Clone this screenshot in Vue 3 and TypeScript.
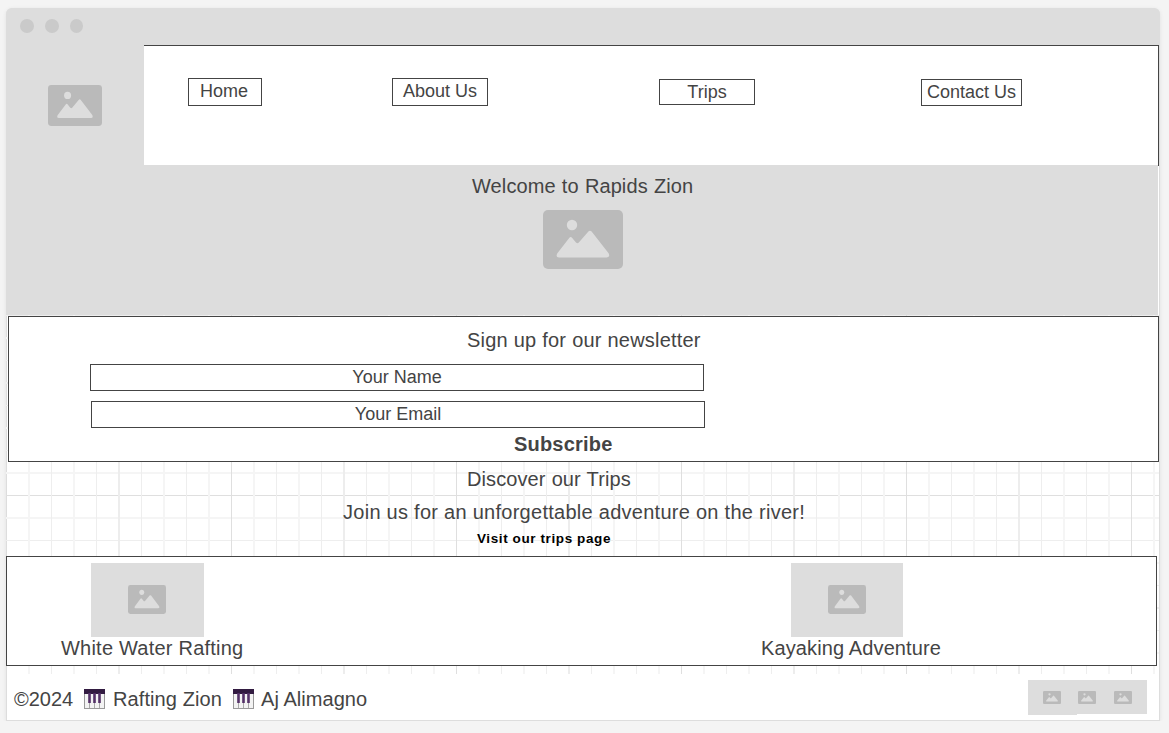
<script setup lang="ts">
import { defineComponent, h } from 'vue'

const PictureIcon = defineComponent({
  name: 'PictureIcon',
  setup() {
    return () =>
      h('svg', { viewBox: '0 0 80 59', preserveAspectRatio: 'none', 'aria-hidden': 'true' }, [
        h('rect', { width: 80, height: 59, rx: 5, fill: '#bababa' }),
        h('circle', { cx: 29, cy: 15, r: 5.2, fill: '#ddd' }),
        h('path', {
          d: 'M14.2 43.5 L26.2 28 Q27.7 26.2 29.2 28 L33 32.6 Q34.4 34 35.8 32.6 L45.4 21.5 Q47 19.8 48.6 21.5 L65.6 43.3 Q67.5 47.4 63.8 47.4 H16 Q12.4 47.4 14.2 43.5 Z',
          fill: '#ddd',
        }),
      ])
  },
})

const PianoIcon = defineComponent({
  name: 'PianoIcon',
  setup() {
    return () =>
      h('svg', { viewBox: '0 0 21 20', 'aria-hidden': 'true' }, [
        h('rect', { x: 0.5, y: 0.5, width: 20, height: 19, fill: '#f3f3f3', stroke: '#999' }),
        h('path', { d: 'M5.5 5V19M10.5 5V19M15.5 5V19', stroke: '#aaa', 'stroke-width': 1 }),
        h('rect', { width: 21, height: 5, fill: '#321b41' }),
        h('path', { d: 'M5.5 4V14M10.5 4V14M15.5 4V14', stroke: '#543168', 'stroke-width': 2.6 }),
      ])
  },
})

interface GridLine { at: number; width: number; color: string }

function gridLine(k: number, start: number, majorOffset: number): GridLine {
  const at = start + k * 22.5
  const crisp = at % 1 !== 0
  const major = (k + majorOffset) % 5 === 0
  return {
    at,
    width: crisp ? 1 : 2,
    color: major ? (crisp ? '#dfdfdf' : '#ededed') : crisp ? '#eeeeee' : '#f5f5f5',
  }
}

const columns = Array.from({ length: 51 }, (_, k) => gridLine(k + 1, 0.5, 0))
const rows = Array.from({ length: 17 }, (_, k) => gridLine(k, 0.5, 2))

const links = [
  { label: 'Home', cls: 'home' },
  { label: 'About Us', cls: 'about' },
  { label: 'Trips', cls: 'trips-link' },
  { label: 'Contact Us', cls: 'contact' },
]
</script>

<template>
  <div class="window">
    <div class="titlebar"><i /><i /><i /></div>
    <header class="top">
      <div class="logo"><PictureIcon class="pic-logo" /></div>
      <nav>
        <a v-for="l in links" :key="l.label" :class="l.cls">{{ l.label }}</a>
      </nav>
    </header>
    <section class="hero">
      <h1><span class="t-welcome">Welcome to Rapids Zion</span></h1>
      <PictureIcon class="pic-hero" />
    </section>
    <div class="canvas">
      <svg class="grid" width="1153" height="359" aria-hidden="true">
        <line v-for="r in rows" :key="'r' + r.at" x1="0" x2="1153" :y1="r.at" :y2="r.at" :stroke="r.color" :stroke-width="r.width" />
        <line v-for="c in columns" :key="'c' + c.at" y1="0" y2="359" :x1="c.at" :x2="c.at" :stroke="c.color" :stroke-width="c.width" />
      </svg>
      <section class="newsletter">
        <h2><span class="t-sign">Sign up for our newsletter</span></h2>
        <div class="field name">Your Name</div>
        <div class="field email">Your Email</div>
        <div class="subscribe"><span class="t-sub">Subscribe</span></div>
      </section>
      <section class="discover">
        <h2><span class="t-disc">Discover our Trips</span></h2>
        <p><span class="t-join">Join us for an unforgettable adventure on the river!</span></p>
        <div class="visit"><span class="t-visit">Visit our trips page</span></div>
      </section>
      <section class="trips">
        <article class="rafting">
          <div class="photo"><PictureIcon class="pic-card" /></div>
          <h3><span class="t-white">White Water Rafting</span></h3>
        </article>
        <article class="kayaking">
          <div class="photo"><PictureIcon class="pic-card" /></div>
          <h3><span class="t-kayak">Kayaking Adventure</span></h3>
        </article>
      </section>
    </div>
    <footer>
      <div class="credit">
        <span class="t-year">©2024</span>
        <PianoIcon class="piano" />
        <span class="t-zion">Rafting Zion</span>
        <PianoIcon class="piano" />
        <span class="t-aj">Aj Alimagno</span>
      </div>
      <div class="social">
        <div class="s1"><PictureIcon class="pic-small" /></div>
        <div class="s2"><PictureIcon class="pic-small" /></div>
        <div class="s3"><PictureIcon class="pic-small" /></div>
      </div>
    </footer>
  </div>
</template>

<style>
html, body { margin: 0; background: #f4f4f4; overflow: hidden; }
</style>

<style scoped>
* { box-sizing: border-box; }
svg { display: block; flex: none; }
h1, h2, h3, p { margin: 0; font-weight: normal; font-size: 20px; line-height: 24px; white-space: nowrap; }
.window {
  width: 1154px; height: 713px; margin: 8px 0 0 6px;
  background: #fff; border-radius: 6px 6px 0 0; overflow: hidden;
  box-shadow: inset 0 0 0 1px #ddd, 0 1px 4px rgba(0, 0, 0, .08);
  font-family: "Liberation Sans", Arial, sans-serif; color: #444;
}
.titlebar { height: 37px; background: #ddd; display: flex; gap: 11px; padding: 11px 0 0 14px; }
.titlebar i { width: 14px; height: 14px; border-radius: 50%; background: #cacaca; }
.titlebar i:last-child { width: 13px; }
.top { display: flex; height: 120px; width: 1153px; }
.logo { width: 138px; background: #ddd; padding: 40px 0 0 42px; }
.pic-logo { width: 54px; height: 41px; }
nav {
  width: 1015px; height: 121px; border: solid #444; border-width: 1px 1px 0 0;
  display: flex; align-items: flex-start; padding: 32px 0 0 44px;
  font-size: 18px; white-space: nowrap;
}
nav a { border: 1px solid #444; text-align: center; flex: none; height: 28px; line-height: 25px; }
.home { width: 74px; padding-right: 2px; }
.about { width: 96px; margin-left: 130px; }
.trips-link { width: 96px; height: 26px; margin: 1px 0 0 171px; }
.contact { width: 101px; height: 27px; margin: 1px 0 0 166px; }
.hero { height: 150px; width: 1152px; background: #ddd; padding-top: 9px; }
.hero h1 { padding-left: 466px; }
.pic-hero { width: 80px; height: 59px; margin: 12px 0 0 537px; }
.canvas { position: relative; height: 359px; padding-top: 1px; }
.grid { position: absolute; left: 0; top: 0; }
.newsletter {
  position: relative; width: 1151px; height: 146px; margin-left: 2px;
  border: 1px solid #444; background: #fff; padding-top: 11px;
}
.newsletter h2 { padding-left: 458px; }
.field {
  width: 614px; height: 27px; border: 1px solid #444;
  font-size: 18px; line-height: 25px; text-align: center;
}
.name { margin: 12px 0 0 81px; }
.email { margin: 10px 0 0 82px; }
.subscribe { font-weight: bold; font-size: 20px; line-height: 24px; margin: 4px 0 0 505px; }
.discover { position: relative; height: 94px; padding-top: 5px; }
.discover h2 { padding-left: 461px; }
.discover p { padding: 9px 0 0 337px; }
.visit { font-size: 13.5px; line-height: 18px; font-weight: bold; color: #000; padding: 6px 0 0 471px; }
.trips {
  position: relative; width: 1151px; height: 110px; border: 1px solid #444;
  background: #fff; display: flex; padding-top: 6px;
}
.rafting { width: 700px; padding-left: 84px; }
.kayaking { padding-left: 84px; }
.photo { width: 113px; height: 74px; background: #ddd; padding: 22px 0 0 37px; }
.kayaking .photo { width: 112px; }
.pic-card { width: 38px; height: 29px; }
.trips h3 { margin: -1px 0 0 -30px; }
footer { height: 46px; display: flex; justify-content: space-between; padding: 6px 13px 0 8px; }
.credit { display: flex; font-size: 20px; line-height: 24px; white-space: nowrap; padding-top: 7px; }
.piano { width: 21px; height: 20px; margin-top: 2px; }
.t-year { width: 70px; }
.t-zion { width: 128px; padding-left: 8px; letter-spacing: .1px; }
.t-aj { padding-left: 7px; letter-spacing: .05px; }
.social { display: flex; }
.social div { height: 34px; background: #ddd; padding-top: 11px; }
.social .s1 { width: 49px; height: 35px; padding-left: 15px; }
.s2 { width: 35px; padding-left: 1px; }
.s3 { width: 35px; padding-left: 2px; }
.pic-small { width: 18px; height: 13px; }
.t-welcome { letter-spacing: .1px; word-spacing: .5px; }
.t-sign { letter-spacing: .2px; word-spacing: .15px; }
.t-sub { letter-spacing: .2px; }
.t-disc { letter-spacing: .1px; word-spacing: .4px; }
.t-join { letter-spacing: .27px; }
.t-visit { letter-spacing: .6px; }
.t-white { letter-spacing: .22px; }
.t-kayak { letter-spacing: .12px; }
</style>
